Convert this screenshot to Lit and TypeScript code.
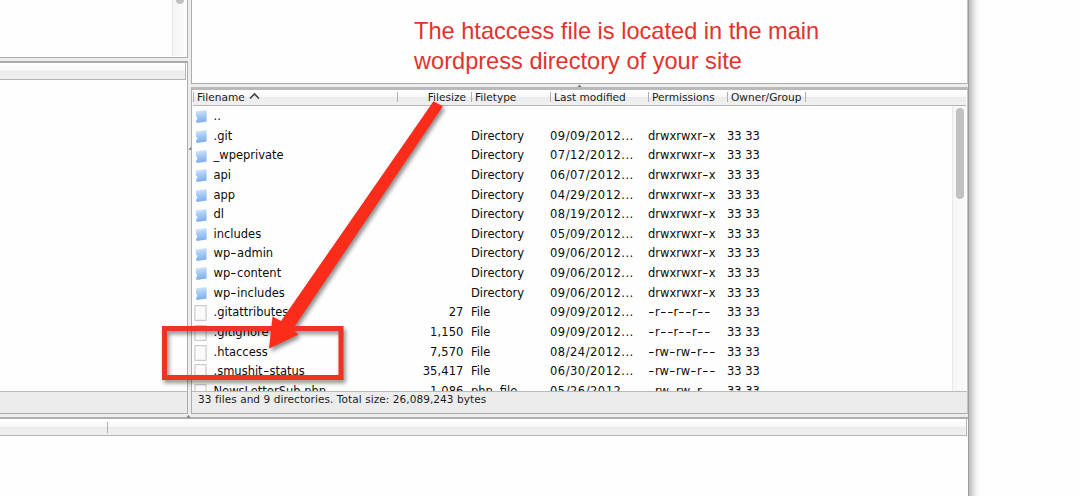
import { LitElement, html, css, nothing } from "lit";
import { customElement } from "lit/decorators.js";

interface Entry {
  name: string;
  size?: string;
  type?: string;
  modified?: string;
  perms?: string;
  owner?: string;
}

const dir = (name: string, modified: string): Entry => ({
  name,
  type: "Directory",
  modified: modified + "...",
  perms: "drwxrwxr-x",
  owner: "33 33",
});

const file = (
  name: string,
  size: string,
  modified: string,
  perms: string,
  type = "File"
): Entry => ({ name, size, type, modified: modified + "...", perms, owner: "33 33" });

const ENTRIES: Entry[] = [
  { name: ".." },
  dir(".git", "09/09/2012"),
  dir("_wpeprivate", "07/12/2012"),
  dir("api", "06/07/2012"),
  dir("app", "04/29/2012"),
  dir("dl", "08/19/2012"),
  dir("includes", "05/09/2012"),
  dir("wp-admin", "09/06/2012"),
  dir("wp-content", "09/06/2012"),
  dir("wp-includes", "09/06/2012"),
  file(".gitattributes", "27", "09/09/2012", "-r--r--r--"),
  file(".gitignore", "1,150", "09/09/2012", "-r--r--r--"),
  file(".htaccess", "7,570", "08/24/2012", "-rw-rw-r--"),
  file(".smushit-status", "35,417", "06/30/2012", "-rw-rw-r--"),
  file("NewsLetterSub.php", "1,086", "05/26/2012", "-rw-rw-r--", "php-file"),
];

const folderIcon = html`
  <svg class="icon" width="14" height="15" viewBox="0 0 14 15">
    <defs>
      <linearGradient id="f" x1="0" y1="0" x2="0.15" y2="1">
        <stop offset="0" stop-color="#e6f0fc" />
        <stop offset="0.35" stop-color="#b3d2f6" />
        <stop offset="1" stop-color="#7daeee" />
      </linearGradient>
    </defs>
    <path d="M1.9 2.2 L12.6 0.9 V12.4 L3.2 14.1 Q1.7 13.6 2.1 11.6 Q3.4 10.6 3.2 9 Q3 7.8 1.9 7.4 Z" fill="url(#f)" />
  </svg>
`;

const fileIcon = html`
  <svg class="icon" width="14" height="16" viewBox="0 0 14 16">
    <rect x="0.9" y="0.7" width="11.2" height="14.6" fill="#fbfbfb" stroke="#b9b9b9" stroke-width="0.9" />
  </svg>
`;

// Hyphens are drawn wider than the font's own
const dashes = (text = "") =>
  text
    .split(/(-)/)
    .map((part) => (part === "-" ? html`<span class="dash">-</span>` : part));

@customElement("app-root")
class AppRoot extends LitElement {
  static override styles = css`
    :host {
      display: block;
      position: relative;
      width: 1080px;
      height: 496px;
      overflow: hidden;
      background: #fefefe;
      color: #0c0c0c;
      font-family: "DejaVu Sans", "Lucida Grande", sans-serif;
      font-size: 11.5px;
    }

    /* runs past both edges so that its shadow stays even */
    .window {
      box-sizing: border-box;
      width: 969px;
      height: 536px;
      margin-top: -20px;
      padding: 20px 0;
      display: flex;
      flex-direction: column;
      background: #ededed;
      border-right: 1px solid #9c9c9c;
      box-shadow: 2px 0 9px rgba(0, 0, 0, 0.4);
    }

    .panes {
      display: flex;
      gap: 3px;
      height: 414px;
    }

    .column {
      display: flex;
      flex-direction: column;
      gap: 3px;
    }

    .local {
      width: 188px;
    }

    .remote {
      flex: 1;
      min-width: 0;
    }

    .pane {
      box-sizing: border-box;
      background: #fefefe;
      border: 1px solid #adadad;
      border-top-width: 0;
    }

    .local .pane {
      border-left: 0;
    }

    .remote .pane {
      border-right-color: #c4c4c4;
    }

    .tree {
      height: 58px;
      display: flex;
      justify-content: flex-end;
    }

    .remote .tree {
      height: 84px;
    }

    .track {
      box-sizing: border-box;
      width: 15px;
      height: 56px;
      border-left: 1px solid #e9e9e9;
      background: linear-gradient(90deg, #f5f5f5, #fcfcfc);
      display: flex;
      justify-content: center;
    }

    .thumb {
      width: 8px;
      border-radius: 4px;
      background: #c1c1c1;
    }

    .track .thumb {
      height: 4px;
      border-radius: 0 0 4px 4px;
    }

    .list {
      flex: 1;
      min-height: 0;
      display: flex;
      flex-direction: column;
      border-top: 2px solid #a9a9a9;
    }

    .remote .list {
      border-top: 3px solid #b9b9b9;
    }

    .header {
      box-sizing: border-box;
      flex: none;
      display: grid;
      height: 16px;
      margin: 0 1px;
      border-bottom: 1px solid #b4b4b4;
      background: linear-gradient(#fff, #f8f8f8 45%, #ececec 50%, #f0f0f0);
      font-size: 10.6px;
      line-height: 15px;
      color: #1c1c1c;
      white-space: nowrap;
    }

    .local .header {
      height: 17px;
      border-right: 1px solid #b4b4b4;
      margin-left: 0;
    }

    .columns,
    .row {
      display: grid;
      grid-template-columns: 204px 74px 79px 98px 79px 78px 1fr;
    }

    .columns span {
      position: relative;
      padding-left: 4px;
    }

    .columns span::before {
      content: "";
      position: absolute;
      left: 0;
      top: 2px;
      width: 1px;
      height: 10px;
      background: #b0b0b0;
    }

    .columns span.num {
      padding-right: 5px;
      text-align: right;
    }

    .sort {
      margin-left: 1px;
      vertical-align: 1px;
    }

    .body {
      flex: 1;
      min-height: 0;
      overflow: hidden;
      display: flex;
      margin-left: 1px;
    }

    .rows {
      flex: 1;
      padding-top: 1px;
    }

    .row {
      height: 19.65px;
      line-height: 19.65px;
      grid-template-columns: 204px 74px 79px 98px 79px 78px;
      white-space: nowrap;
    }

    .name {
      display: flex;
      align-items: center;
      padding-left: 1px;
    }

    .icon {
      flex: none;
      margin-right: 5.5px;
    }

    .size {
      text-align: right;
      padding-right: 7.5px;
      letter-spacing: 0.1px;
    }

    .date {
      letter-spacing: 0.5px;
    }

    .dash {
      display: inline-block;
      width: 6.9px;
      text-align: center;
      transform: scaleX(1.5);
    }

    .body .track {
      height: auto;
      padding-top: 2px;
    }

    .body .thumb {
      height: 91px;
      border-radius: 4px;
    }

    .status {
      box-sizing: border-box;
      flex: none;
      height: 22px;
      padding-left: 6px;
      border-top: 1px solid #b9b9b9;
      background: #ececec;
      font-size: 10.5px;
      letter-spacing: 0.07px;
      line-height: 14px;
      color: #1c1c1c;
      white-space: nowrap;
    }

    .queue {
      flex: 1;
      margin-top: 3px;
      border-top: 2px solid #b0b0b0;
      background: #fefefe;
    }

    .queue .header {
      height: 17px;
      margin: 0 1px 0 0;
      grid-template-columns: 107px 1fr;
      border-right: 1px solid #b4b4b4;
    }

    .queue .header span + span {
      border-left: 1px solid #b0b0b0;
      height: 11px;
      margin-top: 3px;
    }

    .note {
      position: absolute;
      left: 414px;
      top: 16px;
      margin: 0;
      font: 23.6px/30px "Liberation Sans", Arial, sans-serif;
      color: #e2332d;
      white-space: nowrap;
    }

    .marks {
      position: absolute;
      left: 0;
      top: 0;
      filter: drop-shadow(2px 3px 2px rgba(0, 0, 0, 0.45));
    }

    .grips {
      position: absolute;
      left: 0;
      top: 0;
    }
  `;

  private renderRow(e: Entry) {
    return html`
      <div class="row">
        <span class="name">${e.size ? fileIcon : folderIcon}<span>${dashes(e.name)}</span></span>
        <span class="size">${e.size ?? nothing}</span>
        <span>${dashes(e.type)}</span>
        <span class="date">${e.modified ?? nothing}</span>
        <span>${dashes(e.perms)}</span>
        <span>${e.owner ?? nothing}</span>
      </div>
    `;
  }

  override render() {
    return html`
      <div class="window">
        <div class="panes">
          <div class="column local">
            <div class="pane tree">
              <div class="track"><div class="thumb"></div></div>
            </div>
            <div class="pane list">
              <div class="header"></div>
              <div class="body"></div>
              <div class="status"></div>
            </div>
          </div>
          <div class="column remote">
            <div class="pane tree"></div>
            <div class="pane list">
              <div class="header columns">
                <span
                  >Filename
                  <svg class="sort" width="11" height="8" viewBox="0 0 11 8">
                    <path d="M1 6.5 L5.5 2 L10 6.5" fill="none" stroke="#444" stroke-width="1.7" />
                  </svg>
                </span>
                <span class="num">Filesize</span>
                <span>Filetype</span>
                <span>Last modified</span>
                <span>Permissions</span>
                <span>Owner/Group</span>
                <span></span>
              </div>
              <div class="body">
                <div class="rows">${ENTRIES.map((e) => this.renderRow(e))}</div>
                <div class="track"><div class="thumb"></div></div>
              </div>
              <div class="status">
                33 files and 9 directories. Total size: 26,089,243 bytes
              </div>
            </div>
          </div>
        </div>
        <div class="queue">
          <div class="header"><span></span><span></span></div>
        </div>
      </div>

      <svg class="grips" width="1080" height="496" fill="#777">
        <path d="M577.5 87 L579.5 84.5 L581.5 87 Z" />
        <path d="M186.5 417.5 L188.5 415 L190.5 417.5 Z" />
        <path d="M188.5 149.5 L191 147 V150 Z" />
      </svg>

      <p class="note">
        The htaccess file is located in the main<br />wordpress directory of
        your site
      </p>

      <svg class="marks" width="1080" height="496">
        <rect x="164.5" y="328.5" width="176.5" height="49" fill="none" stroke="#ee3224" stroke-width="5" />
        <path d="M433.5 101.3 L442.8 106.3 L292.5 329.5 L298.5 334.5 L269 348.5 L272.5 316.5 L281 321 Z" fill="#fb2c1a" />
      </svg>
    `;
  }
}

// Keep the class in the bundle
void AppRoot;
